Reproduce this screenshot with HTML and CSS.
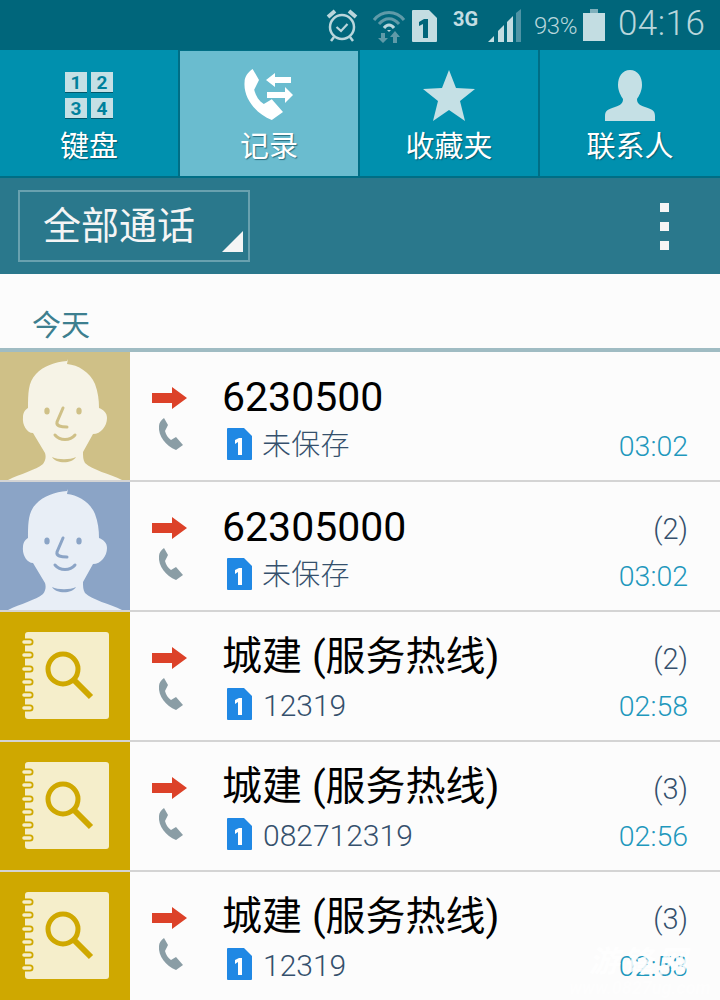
FILE: index.html
```html
<!DOCTYPE html>
<html lang="zh-CN">
<head>
    <meta charset="UTF-8">
    <meta name="viewport" content="width=device-width, initial-scale=1.0">
    <link rel="stylesheet" href="styles.css">
    <title>记录</title>
</head>
<body>
    <svg class="defs" width="0" height="0">
        <defs>
            <symbol id="handset" viewBox="0 0 25 32">
                <path d="M6 0 L10 7 L7 13 C8 17 10 20 13 22 L18 19 L25 27 L18 32 C8 28 0 18 1 8 C1 5 3 2 6 0 Z"/>
            </symbol>
            <symbol id="out-arrow" viewBox="0 0 35 22">
                <path d="M0 6 H20 V0 L35 11 L20 22 V16 H0 Z"/>
            </symbol>
            <symbol id="face" viewBox="0 0 130 128">
                <path class="skin" d="M8 128 C20 122 36 118 43 112 C46 108 46 104 45 101 L33 81 C27 81 22 73 23 65 C23 60 26 57 28 56 C28 42 28 30 36 22 C43 14 55 10 67 9 L68 7 L67 12 C78 13 90 20 95 32 C98 40 99 48 99 56 C104 58 107 61 107 66 C107 74 101 82 93 82 L83 100 C83 104 83 108 85 111 C92 118 110 122 122 128 Z"/>
                <ellipse class="mark" cx="47" cy="59" rx="2.7" ry="3.6"/>
                <ellipse class="mark" cx="79" cy="59" rx="2.7" ry="3.6"/>
                <path class="mark-line" d="M63 56 L57 70 C56 74 61 75 67 75"/>
                <path class="mark-line" d="M55 83 C60 89 70 89 75 83"/>
                <path class="mark-fill" d="M52 105 C58 108 70 108 76 105 C72 112 56 112 52 105 Z"/>
            </symbol>
            <symbol id="book" viewBox="0 0 130 128">
                <rect x="25" y="20" width="84" height="87" rx="3" fill="#f5eecb"/>
                <g stroke-linecap="round">
                    <path stroke="#cfa800" stroke-width="7" d="M24 30 H30 M24 43 H30 M24 57 H30 M24 70 H30 M24 83 H30 M24 96 H30"/>
                    <path stroke="#f5eecb" stroke-width="3.5" d="M24 30 H30 M24 43 H30 M24 57 H30 M24 70 H30 M24 83 H30 M24 96 H30"/>
                </g>
                <circle cx="63" cy="57" r="15" fill="none" stroke="#cfa800" stroke-width="5"/>
                <path d="M74 68 L91 85" stroke="#cfa800" stroke-width="6"/>
            </symbol>
            <symbol id="sim" viewBox="0 0 25 32">
                <path d="M0 1 Q0 0 1 0 H17 L25 8 V31 Q25 32 24 32 H1 Q0 32 0 31 Z"/>
            </symbol>
        </defs>
    </svg>

    <div class="phone">
        <header class="status">
            <svg class="st-alarm" width="32" height="33" viewBox="0 0 32 33" fill="none" stroke="#b9d6dc">
                <circle cx="16" cy="18" r="12" stroke-width="2.5"/>
                <path d="M10.5 18 L15 22 L21.5 15" stroke-width="2.2"/>
                <path d="M2 8 L9 2 M30 8 L23 2" stroke-width="4"/>
                <path d="M8 28 L5 32 M24 28 L27 32" stroke-width="2.5"/>
            </svg>
            <svg class="st-wifi" width="34" height="34" viewBox="0 0 34 34" fill="none" stroke="#5f9aa8">
                <path d="M2 11 C10 1 24 1 32 11" stroke-width="3"/>
                <path d="M7 15 C13 8 21 8 27 15" stroke-width="3"/>
                <path d="M12 19 C15 15 19 15 22 19" stroke="#b9d6dc" stroke-width="3"/>
                <path d="M15 21 H19 L17 23 Z" fill="#b9d6dc" stroke="none"/>
                <path d="M9 24 H13 V29 H16 L11 34 L6 29 H9 Z" fill="#5f9aa8" stroke="none"/>
                <path d="M21 34 H25 V28 H28 L23 22 L18 28 H21 Z" fill="#5f9aa8" stroke="none"/>
            </svg>
            <svg class="st-sim" width="25" height="32" viewBox="0 0 25 32">
                <use href="#sim" fill="#c3dde2"/>
                <path d="M7 12 L12 9 H16 V28 H11 V14 L7 16 Z" fill="#00667b"/>
            </svg>
            <span class="st-net">3G</span>
            <svg class="st-signal" width="34" height="33" viewBox="0 0 34 33">
                <path d="M0 33 L6 27 V33 Z" fill="#c3dde2"/>
                <path d="M10 33 V22 L16 16 V33 Z" fill="#c3dde2"/>
                <path d="M19 33 V13 L25 7 V33 Z" fill="#c3dde2"/>
                <path d="M28 33 V4 L33 0 V33 Z" fill="#4f94a5"/>
            </svg>
            <span class="st-pct">93%</span>
            <span class="st-battery"></span>
            <span class="st-clock">04:16</span>
        </header>

        <nav class="tabs">
            <div class="tab">
                <div class="tab-icon">
                    <div class="keys">
                        <span>1</span><span>2</span><span>3</span><span>4</span>
                    </div>
                </div>
                <div class="tab-label">键盘</div>
            </div>
            <div class="tab tab-on">
                <div class="tab-icon">
                    <svg width="52" height="54" viewBox="0 0 52 54" fill="#fff">
                        <use href="#handset" width="40" height="53" x="0" y="0"/>
                        <path d="M23 12 L32 5 V9 H48 V15 H32 V19 Z"/>
                        <path d="M24 24 H42 V19 L50 27 L42 35 V30 H24 Z"/>
                    </svg>
                </div>
                <div class="tab-label">记录</div>
            </div>
            <div class="tab">
                <div class="tab-icon">
                    <svg class="tab-glyph" width="52" height="52" viewBox="0 0 52 52" fill="#c5e0e5">
                        <path d="M26 0 L33 18 L52 19 L37 31 L42 51 L26 40 L10 51 L15 31 L0 19 L19 18 Z"/>
                    </svg>
                </div>
                <div class="tab-label">收藏夹</div>
            </div>
            <div class="tab">
                <div class="tab-icon">
                    <svg class="tab-glyph" width="50" height="52" viewBox="0 0 50 52" fill="#c5e0e5">
                        <path d="M25 0 C33 0 37 7 37 15 C37 21 34 26 32 29 C32 33 34 35 40 37 C46 39 50 40 50 46 V51 H0 V46 C0 40 4 39 10 37 C16 35 18 33 18 29 C16 26 13 21 13 15 C13 7 17 0 25 0 Z"/>
                    </svg>
                </div>
                <div class="tab-label">联系人</div>
            </div>
        </nav>

        <div class="toolbar">
            <div class="spinner">全部通话</div>
            <div class="more"><span></span><span></span><span></span></div>
        </div>

        <div class="day">今天</div>

        <div class="log">
            <div class="row">
                <svg class="pic pic-sand"><use href="#face"/></svg>
                <div class="call-icons">
                    <svg class="ic-out"><use href="#out-arrow"/></svg>
                    <svg class="ic-phone"><use href="#handset"/></svg>
                </div>
                <div class="main">
                    <div class="name">6230500</div>
                    <div class="sub"><svg class="sim-blue"><use href="#sim"/><path d="M8 12 L12 10 H15 V27 H11 V14 L8 16 Z" fill="#fff"/></svg><span class="sub-cn">未保存</span></div>
                </div>
                <div class="side"><div class="count"></div><div class="time">03:02</div></div>
            </div>
            <div class="row">
                <svg class="pic pic-blue"><use href="#face"/></svg>
                <div class="call-icons">
                    <svg class="ic-out"><use href="#out-arrow"/></svg>
                    <svg class="ic-phone"><use href="#handset"/></svg>
                </div>
                <div class="main">
                    <div class="name">62305000</div>
                    <div class="sub"><svg class="sim-blue"><use href="#sim"/><path d="M8 12 L12 10 H15 V27 H11 V14 L8 16 Z" fill="#fff"/></svg><span class="sub-cn">未保存</span></div>
                </div>
                <div class="side"><div class="count">(2)</div><div class="time">03:02</div></div>
            </div>
            <div class="row">
                <svg class="pic pic-gold"><use href="#book"/></svg>
                <div class="call-icons">
                    <svg class="ic-out"><use href="#out-arrow"/></svg>
                    <svg class="ic-phone"><use href="#handset"/></svg>
                </div>
                <div class="main">
                    <div class="name name-cn">城建 (服务热线)</div>
                    <div class="sub"><svg class="sim-blue"><use href="#sim"/><path d="M8 12 L12 10 H15 V27 H11 V14 L8 16 Z" fill="#fff"/></svg><span class="sub-num">12319</span></div>
                </div>
                <div class="side"><div class="count">(2)</div><div class="time">02:58</div></div>
            </div>
            <div class="row">
                <svg class="pic pic-gold"><use href="#book"/></svg>
                <div class="call-icons">
                    <svg class="ic-out"><use href="#out-arrow"/></svg>
                    <svg class="ic-phone"><use href="#handset"/></svg>
                </div>
                <div class="main">
                    <div class="name name-cn">城建 (服务热线)</div>
                    <div class="sub"><svg class="sim-blue"><use href="#sim"/><path d="M8 12 L12 10 H15 V27 H11 V14 L8 16 Z" fill="#fff"/></svg><span class="sub-num">082712319</span></div>
                </div>
                <div class="side"><div class="count">(3)</div><div class="time">02:56</div></div>
            </div>
            <div class="row">
                <svg class="pic pic-gold"><use href="#book"/></svg>
                <div class="call-icons">
                    <svg class="ic-out"><use href="#out-arrow"/></svg>
                    <svg class="ic-phone"><use href="#handset"/></svg>
                </div>
                <div class="main">
                    <div class="name name-cn">城建 (服务热线)</div>
                    <div class="sub"><svg class="sim-blue"><use href="#sim"/><path d="M8 12 L12 10 H15 V27 H11 V14 L8 16 Z" fill="#fff"/></svg><span class="sub-num">12319</span></div>
                </div>
                <div class="side"><div class="count">(3)</div><div class="time">02:53</div></div>
            </div>
        </div>

        <div class="watermark">
            <div class="wm-big">游锋网</div>
            <div class="wm-url">www.0827ug.com</div>
        </div>
    </div>
</body>
</html>
```

FILE: styles.css
```css
html, body {
    margin: 0;
    padding: 0;
}

body {
    background: #fcfcfc;
    font-family: Roboto, "Noto Sans CJK SC", sans-serif;
}

.defs {
    display: block;
    height: 0;
}

.phone {
    position: relative;
    width: 720px;
    height: 1000px;
    overflow: hidden;
}

/* barra de status */
.status {
    height: 50px;
    background: #00667b;
    color: #b9d6dc;
    display: flex;
    align-items: flex-start;
    padding-left: 326px;
    box-sizing: border-box;
}

.st-alarm { margin-top: 9px; }
.st-wifi { margin: 9px 0 0 14px; }
.st-sim { margin: 10px 0 0 6px; }

.st-net {
    width: 26px;
    margin: 7px 0 0 16px;
    font-size: 20px;
    font-weight: 700;
    color: #c3dde2;
}

.st-signal { margin: 9px 0 0 9px; }

.st-pct {
    margin: 12px 0 0 12px;
    font-size: 24px;
    font-weight: 300;
    letter-spacing: -0.5px;
}

.st-battery {
    position: relative;
    width: 22px;
    height: 28px;
    margin: 13px 0 0 6px;
    background: #c3dde2;
}

.st-battery::before {
    content: "";
    position: absolute;
    top: -4px;
    left: 7px;
    width: 8px;
    height: 4px;
    background: #7fb0bc;
}

.st-clock {
    margin: 3px 0 0 13px;
    font-size: 35px;
    font-weight: 300;
    letter-spacing: 0.5px;
}

/* abas */
.tabs {
    height: 128px;
    display: grid;
    grid-template-columns: repeat(4, 180px);
    background: #0090ae;
    border-bottom: 2px solid #006e85;
    box-sizing: border-box;
}

.tab {
    border-right: 2px solid #006e85;
    box-sizing: border-box;
    padding-top: 18px;
    display: flex;
    flex-direction: column;
    align-items: center;
}

.tab:last-child {
    border-right: 0;
}

.tab-on {
    background: #6abccf;
    border-top: 1px solid #006e85;
    padding-top: 17px;
}

.tab-icon {
    height: 56px;
    display: flex;
    justify-content: center;
    align-items: flex-start;
}

.tab-glyph {
    margin-top: 2px;
}

.tab-label {
    margin-top: 4px;
    font-size: 29px;
    line-height: 38px;
    color: #fff;
    text-shadow: 1px 1px 1px rgba(0, 60, 75, 0.6);
}

.keys {
    display: grid;
    grid-template-columns: 22px 22px;
    grid-auto-rows: 21px;
    gap: 5px 4px;
    margin-top: 4px;
}

.keys span {
    background: #c5e0e5;
    border-bottom: 1px solid #00586b;
    color: #00809c;
    font-size: 19px;
    font-weight: 700;
    line-height: 21px;
    text-align: center;
}

/* barra de filtro */
.toolbar {
    height: 96px;
    background: #2a788c;
    display: flex;
    align-items: center;
    justify-content: space-between;
    padding: 0 51px 0 18px;
}

.spinner {
    position: relative;
    width: 232px;
    height: 72px;
    box-sizing: border-box;
    border: 2px solid #69a1af;
    padding-left: 23px;
    font-size: 38px;
    line-height: 68px;
    color: #f5f5f5;
}

.spinner::after {
    content: "";
    position: absolute;
    right: 5px;
    bottom: 8px;
    border-style: solid;
    border-width: 0 0 21px 21px;
    border-color: transparent transparent #f5f5f5 transparent;
}

.more {
    display: flex;
    flex-direction: column;
    gap: 10px;
}

.more span {
    width: 9px;
    height: 9px;
    background: #f5f5f5;
}

.day {
    height: 74px;
    box-sizing: border-box;
    padding: 32px 0 0 32px;
    font-size: 29px;
    line-height: 40px;
    color: #3d7f8f;
    background: #fcfcfc;
}

/* lista de chamadas */
.log {
    border-top: 4px solid #a0bcc3;
}

.row {
    height: 130px;
    box-sizing: border-box;
    border-bottom: 2px solid #d4d4d4;
    display: flex;
    background: #fcfcfc;
}

.pic {
    flex: none;
    width: 130px;
    height: 128px;
}

.pic-sand { background: #cfc087; --skin: #f6f3e6; --mark: #cfc087; }
.pic-blue { background: #8ba4c6; --skin: #e8eef6; --mark: #8ba4c6; }
.pic-gold { background: #cfa800; }

.skin { fill: var(--skin); }
.mark, .mark-fill { fill: var(--mark); }
.mark-line {
    fill: none;
    stroke: var(--mark);
    stroke-width: 3;
    stroke-linecap: round;
}

.call-icons {
    flex: none;
    width: 92px;
    padding: 35px 0 0 22px;
    box-sizing: border-box;
}

.ic-out {
    display: block;
    width: 35px;
    height: 22px;
    fill: #dc4128;
}

.ic-phone {
    display: block;
    width: 25px;
    height: 32px;
    margin: 9px 0 0 6px;
    fill: #8a9da5;
}

.main {
    flex: 1;
    padding-top: 22px;
}

.name {
    font-size: 41px;
    line-height: 46px;
    color: #000;
    white-space: nowrap;
}

.name-cn {
    font-size: 40px;
}

.sub {
    display: flex;
    align-items: center;
    height: 40px;
    margin-top: 4px;
    color: #35506c;
}

.sub-cn {
    margin: -4px 0 0 -1px;
    font-size: 29px;
    font-weight: 300;
    letter-spacing: 0.2px;
}

.sub-num {
    margin-top: 2px;
    font-size: 30px;
    font-weight: 300;
}

.sim-blue {
    flex: none;
    width: 25px;
    height: 32px;
    margin: 0 11px 0 5px;
    fill: #2088e4;
}

.side {
    flex: none;
    padding: 27px 32px 0 0;
    text-align: right;
}

.count {
    height: 40px;
    font-size: 29px;
    font-weight: 300;
    line-height: 40px;
    color: #35506c;
}

.time {
    margin-top: 8px;
    font-size: 28.5px;
    line-height: 40px;
    color: #1f98bd;
    font-weight: 300;
}

/* marca d'agua por cima da lista */
.watermark {
    position: absolute;
    right: 0;
    bottom: 3px;
    width: 160px;
    color: rgba(255, 255, 255, 0.9);
    font-style: italic;
    font-weight: 700;
    text-align: center;
}

.wm-big {
    font-size: 30px;
    line-height: 34px;
    letter-spacing: 4px;
}

.wm-url {
    font-size: 18px;
    line-height: 18px;
    opacity: 0.6;
}
```
